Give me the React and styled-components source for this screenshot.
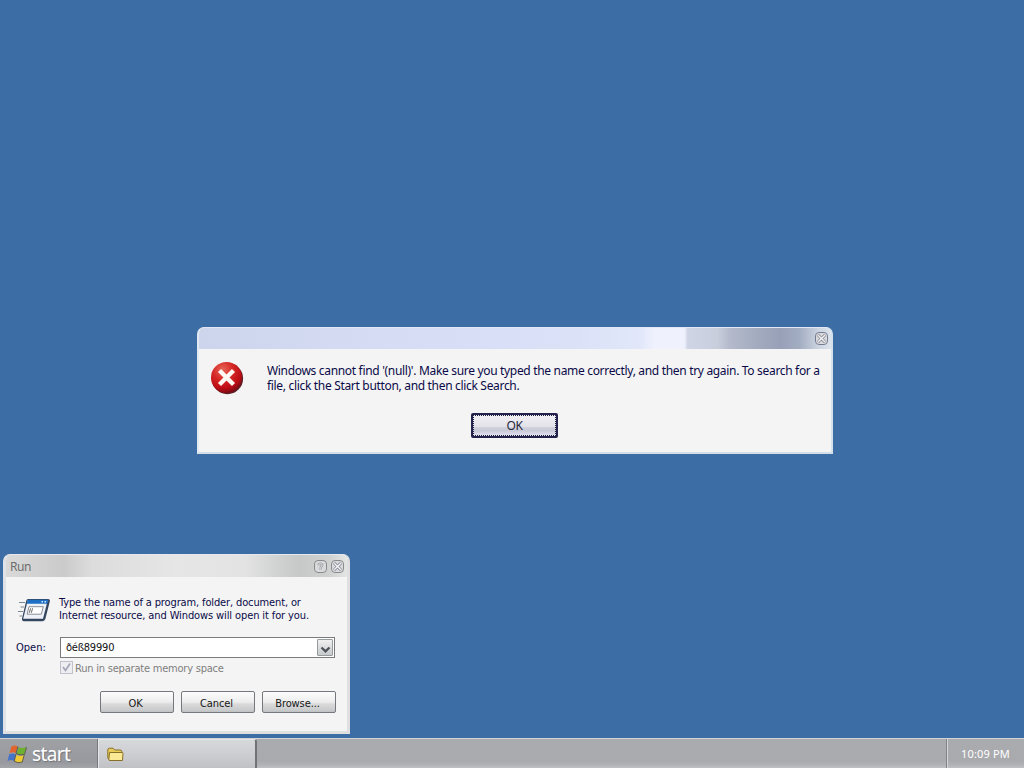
import React from 'react'
import styled, { createGlobalStyle } from 'styled-components'

function App() {
    return (
        <Desktop>
            <GlobalStyle />
            <ErrorWindow>
                <ErrorTitle>
                    <TitleButton $tint="#777b91"><CloseIcon /></TitleButton>
                </ErrorTitle>
                <ErrorBody>
                    <ErrorIcon />
                    <ErrorText>
                        <Line $space="-0.32px">Windows cannot find '(null)'. Make sure you typed the name correctly, and then try again. To search for a</Line>
                        <Line $space="-0.32px">file, click the Start button, and then click Search.</Line>
                    </ErrorText>
                </ErrorBody>
                <DefaultButton><span>OK</span></DefaultButton>
            </ErrorWindow>

            <RunWindow>
                <RunTitle>
                    <TitleText>Run</TitleText>
                    <TitleButton $tint="#8b8b8b"><HelpIcon /></TitleButton>
                    <TitleButton $tint="#8b8b8b"><CloseIcon /></TitleButton>
                </RunTitle>
                <RunBody>
                    <Intro>
                        <RunIcon />
                        <IntroText>
                            <Line $space="-0.13px">Type the name of a program, folder, document, or</Line>
                            <Line $space="-0.11px">Internet resource, and Windows will open it for you.</Line>
                        </IntroText>
                    </Intro>
                    <Field>
                        <Label>Open:</Label>
                        <Combo>
                            <ComboText>ðéß89990</ComboText>
                            <ComboButton>
                                <svg width="11" height="8" viewBox="0 0 11 8">
                                    <path d="M1.5 1.5 L5.5 5.3 L9.5 1.5" fill="none" stroke="#4d5358" strokeWidth="2.3" />
                                </svg>
                            </ComboButton>
                        </Combo>
                    </Field>
                    <CheckRow>
                        <CheckBox>
                            <svg width="11" height="11" viewBox="0 0 11 11">
                                <path d="M2 5 L4.5 8.5 L9 1.5" fill="none" stroke="#a5a5b8" strokeWidth="1.7" />
                            </svg>
                        </CheckBox>
                        <CheckLabel>Run in separate memory space</CheckLabel>
                    </CheckRow>
                    <ButtonGroup>
                        <Button>OK</Button>
                        <Button>Cancel</Button>
                        <Button>Browse...</Button>
                    </ButtonGroup>
                </RunBody>
            </RunWindow>

            <Taskbar>
                <StartButton>
                    <Flag />
                    <StartText>start</StartText>
                </StartButton>
                <Task><Folder /></Task>
                <Tray>10:09 PM</Tray>
            </Taskbar>
        </Desktop>
    )
}

export default App

function CloseIcon() {
    return (
        <svg width="9" height="9" viewBox="0 0 9 9">
            <path d="M1 1 L8 8 M8 1 L1 8" stroke="#85878f" strokeWidth="3" />
            <path d="M1.2 1.2 L7.8 7.8 M7.8 1.2 L1.2 7.8" stroke="#f4f4f8" strokeWidth="1.4" />
        </svg>
    )
}

function HelpIcon() {
    return (
        <svg width="7" height="9" viewBox="0 0 9 10">
            <path d="M2 3.3 C2 .8 6.8 .8 6.8 3.2 C6.8 4.7 4.6 4.6 4.6 6.5 M4.6 7.4 V9.2" fill="none" stroke="#9c9ea0" strokeWidth="3" />
            <path d="M2 3.3 C2 .8 6.8 .8 6.8 3.2 C6.8 4.7 4.6 4.6 4.6 6.3 M4.6 7.7 V9" fill="none" stroke="#ececec" strokeWidth="1.2" />
        </svg>
    )
}

function ErrorIcon() {
    return (
        <svg width="34" height="34" viewBox="0 0 34 34">
            <defs>
                <radialGradient id="red" cx=".38" cy=".25" r=".8">
                    <stop offset="0" stopColor="#e66557" />
                    <stop offset=".4" stopColor="#d62a27" />
                    <stop offset=".75" stopColor="#bd0d16" />
                    <stop offset="1" stopColor="#6d0910" />
                </radialGradient>
            </defs>
            <circle cx="17.4" cy="17.5" r="15.7" fill="#5c2026" />
            <circle cx="16.5" cy="16.5" r="15.5" fill="url(#red)" />
            <path d="M9.5 9.5 L23.5 23.5 M23.5 9.5 L9.5 23.5" stroke="#fff9f3" strokeWidth="4.3" />
        </svg>
    )
}

function RunIcon() {
    return (
        <svg width="34" height="26" viewBox="0 0 34 26">
            <path d="M11 1 H31 Q33.4 1.2 32.8 3.4 L28.4 20.8 Q27.8 23.2 25.5 23.2 H6.5 Q4.4 22.8 5 20.5 L9.2 2.8 Q9.8 1 11 1Z" fill="#34465f" />
            <path d="M10.8 2.2 H30.7 L26 20.8 H6.2Z" fill="#eef2f8" />
            <path d="M10.8 1.7 H31.2 L30.1 5.7 H9.7Z" fill="#1c6fc4" />
            <path d="M24.5 3.7 H26 M27.5 3.7 H29" stroke="#d8ecff" strokeWidth="1.4" />
            <path d="M12 8.7 H26.3 L24.3 16.2 H10.1Z" fill="#fff" stroke="#8a8f96" />
            <path d="M13.6 10.3 L12.3 14.8 M15.6 10.3 L14.3 14.8" stroke="#555" strokeWidth=".9" />
            <path d="M2 4.5 H8 M3.5 9 H7 M1 13.5 H6 M2.5 18 H5" stroke="#7b8896" strokeWidth="1.2" />
        </svg>
    )
}

function Flag() {
    return (
        <svg width="21" height="20" viewBox="0 0 21 20">
            <path d="M4.3 2.7 Q7.5 .3 10.5 2.3 L8.8 9 Q6 7.4 2.5 9.2Z" fill="#e2652f" />
            <path d="M11.6 3.3 Q15 5 19.3 3 L17.4 10 Q13.5 11.7 9.8 9.8Z" fill="#6eb030" />
            <path d="M2.2 10.3 Q5.5 8.5 8.5 10.3 L6.8 16.8 Q4 15.2 .5 17Z" fill="#4674cb" />
            <path d="M9.5 11 Q13 12.8 17 11 L15.2 17.7 Q11.5 19.5 7.8 17.5Z" fill="#efc934" />
            <path d="M10.9 2.6 L9 9.5 Q13.2 12 17.6 10.3 L19.5 3.2 M8.8 10.4 L7.1 17.1 Q11 19.8 15.3 18 L17.2 11" stroke="#4b4e3e" strokeWidth=".8" fill="none" />
        </svg>
    )
}

function Folder() {
    return (
        <svg width="17" height="15" viewBox="0 0 17 15">
            <path d="M.8 3 Q.8 1.2 2.3 1.2 H6 L7.7 3 H13 Q14.8 3 14.8 4.5 V12.8 H2.3 L.8 11Z" fill="#e9cc58" stroke="#86702a" />
            <path d="M2.6 5.5 H15 Q16.2 5.5 16 6.5 L15.5 13.5 H3 Q1.6 13.5 1.8 12.3Z" fill="#fbe994" stroke="#86702a" />
        </svg>
    )
}

const GlobalStyle = createGlobalStyle`
    * {
        box-sizing: border-box;
    }
    body {
        margin: 0;
        overflow: hidden;
    }
    svg {
        display: block;
        flex: none;
    }
`

const Desktop = styled.div`
    position: relative;
    display: flex;
    flex-direction: column;
    justify-content: flex-end;
    width: 1024px;
    height: 768px;
    background: #3c6da5;
    font-family: 'DejaVu Sans Condensed', 'DejaVu Sans', sans-serif;
    font-stretch: condensed;
    font-size: 11px;
    color: #0a0a48;
    white-space: nowrap;
`

const Window = styled.div`
    position: absolute;
    display: flex;
    flex-direction: column;
    background: #f4f4f4;
    border-style: solid;
    border-width: 1px 2px 2px;
    border-radius: 7px 7px 0 0;
    overflow: hidden;
`

const ErrorWindow = styled(Window)`
    left: 197px;
    top: 327px;
    width: 636px;
    height: 127px;
    border-color: #e3e7f3 #d6e2eb #d3dfe6 #e1e9f3;
    font-family: 'Noto Sans', sans-serif;
    font-stretch: normal;
    font-size: 12px;
`

const RunWindow = styled(Window)`
    left: 3px;
    top: 554px;
    width: 347px;
    height: 180px;
    border-color: #e5e8ed #dfdfe2 #dfdfdf #dfe3e8;
    border-width: 1px 3px 3px;
`

const TitleBar = styled.div`
    display: flex;
    align-items: center;
    justify-content: flex-end;
    gap: 4px;
    flex: none;
`

const ErrorTitle = styled(TitleBar)`
    height: 21px;
    padding-right: 3px;
    background: linear-gradient(90deg, #ccd5ec 0%, #d6dcf4 30%, #dbe1f7 60%, #e2e8fa 70%, #eff1fc 72%, #eff1fc 76.8%, #d0d5e6 77.3%, #c9cedd 82%, #b4bacb 84%, #a4acc0 88%, #97a0b7 92%, #a3adc2 95%, #cbd4e0 98%, #dce3ed 100%);
`

const RunTitle = styled(TitleBar)`
    height: 22px;
    padding: 0 3px 0 4px;
    background: linear-gradient(90deg, #d9d9d9 0%, #cfcfcf 12%, #cbcbcb 17%, #dcdcdc 25%, #e6e6e6 50%, #e3e3e3 70%, #d0d2d1 80%, #c6c9c8 86%, #d0d2d1 95%, #e4e5e5 100%);
`

const TitleText = styled.span`
    flex: 1;
    padding-top: 1px;
    color: #6d6d6d;
    font: 12px 'Noto Sans', sans-serif;
    letter-spacing: -0.4px;
`

const TitleButton = styled.div`
    display: flex;
    align-items: center;
    justify-content: center;
    width: 13px;
    height: 13px;
    border: 1px solid ${p => p.$tint};
    border-radius: 4px;
    background: #d9dadd;
`

const ErrorBody = styled.div`
    display: flex;
    gap: 23px;
    height: 64px;
    padding: 12px 0 0 11px;
`

const ErrorText = styled.div`
    line-height: 15px;
    padding-top: 2px;
`

const Line = styled.div`
    letter-spacing: ${p => p.$space};
`

const DefaultButton = styled.button`
    align-self: center;
    width: 87px;
    height: 25px;
    margin-right: 1px;
    padding: 1px;
    border: 2px solid #22224d;
    border-radius: 2px;
    background: linear-gradient(#f0f0f5 0%, #e2e2e9 55%, #cfd0dc 60%, #c9cad8 75%, #e6e4f1 100%);
    font: 12px 'Noto Sans', sans-serif;
    letter-spacing: -0.3px;
    color: #252538;

    span {
        display: block;
        height: 19px;
        line-height: 20px;
        outline: 1px dotted #202040;
    }
`

const RunBody = styled.div`
    display: flex;
    flex-direction: column;
    flex: 1;
    padding: 19px 11px 0 10px;
`

const Intro = styled.div`
    display: flex;
    gap: 9px;
    height: 41px;

    svg {
        margin: 2px 0 0 1px;
    }
`

const IntroText = styled.div`
    line-height: 13px;
    margin-left: -1px;
`

const Field = styled.div`
    display: flex;
    align-items: center;
`

const Label = styled.span`
    width: 44px;
`

const Combo = styled.div`
    display: flex;
    align-items: center;
    justify-content: space-between;
    flex: 0 0 275px;
    height: 21px;
    padding: 0 1px 0 5px;
    border: 1px solid #7b7b7b;
    background: #fff;
`

const ComboText = styled.span`
    color: #101010;
    letter-spacing: -0.2px;
`

const ComboButton = styled.div`
    display: flex;
    align-items: center;
    justify-content: center;
    width: 16px;
    height: 17px;
    padding-top: 4px;
    border: 1px solid #969b9e;
    border-radius: 1px;
    background: linear-gradient(#f0f0f0, #c6cacc);
`

const CheckRow = styled.div`
    display: flex;
    align-items: center;
    gap: 2px;
    height: 13px;
    margin: 3px 0 17px 44px;
`

const CheckBox = styled.div`
    width: 13px;
    height: 13px;
    border: 1px solid #c1c1cb;
    background: #eeeef2;
`

const CheckLabel = styled.span`
    padding-top: 2px;
    color: #7e7e7e;
    letter-spacing: -0.21px;
`

const ButtonGroup = styled.div`
    display: flex;
    gap: 7px;
    margin-left: 84px;
`

const Button = styled.button`
    flex: none;
    width: 74px;
    height: 22px;
    padding: 2px 3px 0 0;
    border: 1px solid #75797d;
    border-radius: 2px;
    background: linear-gradient(#fcfcfc 0%, #ededed 50%, #dadada 60%, #c9cbcc 90%, #bec1c3 100%);
    font: inherit;
    letter-spacing: -0.1px;
    color: #171717;
`

const Taskbar = styled.div`
    display: flex;
    height: 30px;
    border-top: 1px solid #d2d3d7;
    background: linear-gradient(#aaabaf 0%, #a9aaae 75%, #b2b3b6 90%, #bfc0c2 100%);
`

const StartButton = styled.div`
    display: flex;
    align-items: center;
    gap: 4px;
    width: 98px;
    padding-left: 7px;
    border-right: 1px solid #777980;
    background: linear-gradient(#a0a1a5, #97999e 80%, #a3a5a9);
`

const StartText = styled.span`
    padding-top: 1px;
    color: #fff;
    font: 19px 'Noto Sans', sans-serif;
    letter-spacing: -0.6px;
    text-shadow: 1px 1px 1px #73757b;
`

const Task = styled.div`
    display: flex;
    align-items: center;
    width: 159px;
    padding-left: 8px;
    border: solid #e4e5e7;
    border-width: 1px 0 0 1px;
    border-right: 2px solid #707278;
    border-radius: 0 3px 0 0;
    background: linear-gradient(#d7d8da 0%, #cbccd0 60%, #bfc1c5 100%);
`

const Tray = styled.div`
    display: flex;
    align-items: center;
    width: 78px;
    margin-left: auto;
    padding-left: 14px;
    border-left: 1px solid #818389;
    box-shadow: inset 1px 0 #d4d5d7;
    color: #fff;
    font-family: 'Noto Sans', sans-serif;
    font-stretch: normal;
    font-size: 11px;
    letter-spacing: 0.15px;
`
